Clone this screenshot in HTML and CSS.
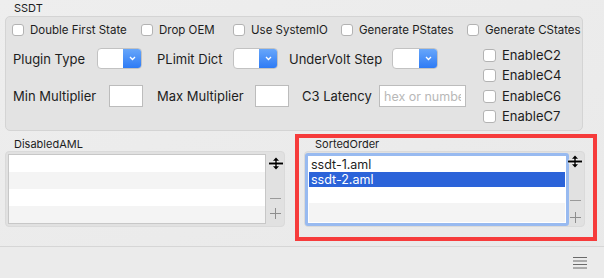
FILE: index.html
```html
<!doctype html>
<html>
   <head>
      <meta charset="utf-8">
      <title>SSDT</title>
      <link rel="stylesheet" href="styles.css">
   </head>
   <body>
      <div class="window">
         <div class="group-title">SSDT</div>
         <div class="group">
            <div class="flags">
               <label class="check"><input type="checkbox"> Double First State</label>
               <label class="check"><input type="checkbox"> Drop OEM</label>
               <label class="check"><input type="checkbox"> Use SystemIO</label>
               <label class="check"><input type="checkbox"> Generate PStates</label>
               <label class="check"><input type="checkbox"> Generate CStates</label>
            </div>
            <div class="group-body">
               <div class="form">
                  <div class="form-row">
                     <span class="lbl plugin">Plugin Type</span>
                     <span class="popup"><span class="popup-value"></span><span class="popup-arrow"><svg width="7" height="5" viewBox="0 0 7 5"><path d="M1 1L3.5 3.5L6 1" fill="none" stroke="#fff" stroke-width="1.3"/></svg></span></span>
                     <span class="lbl plimit">PLimit Dict</span>
                     <span class="popup"><span class="popup-value"></span><span class="popup-arrow"><svg width="7" height="5" viewBox="0 0 7 5"><path d="M1 1L3.5 3.5L6 1" fill="none" stroke="#fff" stroke-width="1.3"/></svg></span></span>
                     <span class="lbl undervolt">UnderVolt Step</span>
                     <span class="popup wide"><span class="popup-value"></span><span class="popup-arrow"><svg width="7" height="5" viewBox="0 0 7 5"><path d="M1 1L3.5 3.5L6 1" fill="none" stroke="#fff" stroke-width="1.3"/></svg></span></span>
                  </div>
                  <div class="form-row tall">
                     <span class="lbl minmul">Min Multiplier</span>
                     <input class="field" type="text">
                     <span class="lbl maxmul">Max Multiplier</span>
                     <input class="field" type="text">
                     <span class="lbl latency">C3 Latency</span>
                     <input class="field long" type="text" placeholder="hex or number">
                  </div>
               </div>
               <div class="cstates">
                  <label class="check big"><input type="checkbox"> EnableC2</label>
                  <label class="check big"><input type="checkbox"> EnableC4</label>
                  <label class="check big"><input type="checkbox"> EnableC6</label>
                  <label class="check big"><input type="checkbox"> EnableC7</label>
               </div>
            </div>
         </div>
         <div class="lists">
            <section class="list-panel">
               <div class="list-title">DisabledAML</div>
               <div class="list-frame">
                  <div class="table">
                     <div class="row"></div>
                     <div class="row"></div>
                     <div class="row"></div>
                     <div class="row"></div>
                  </div>
                  <div class="side">
                     <svg class="grip" width="16" height="13" viewBox="0 0 16 13"><path d="M1 6.5H15M8 2V11" stroke="#fff" stroke-width="3.5"/><path d="M1 6.5H15" stroke="#000" stroke-width="2"/><path d="M8 2V11" stroke="#000" stroke-width="1.4"/><path d="M5 3.8L8 0.6L11 3.8ZM5 9.2L8 12.4L11 9.2Z" fill="#000"/></svg>
                     <span class="minus"></span>
                     <span class="plus"></span>
                  </div>
               </div>
            </section>
            <section class="list-panel marked">
               <div class="list-title">SortedOrder</div>
               <div class="list-frame">
                  <div class="table focused">
                     <div class="row">ssdt-1.aml</div>
                     <div class="row selected">ssdt-2.aml</div>
                     <div class="row"></div>
                     <div class="row"></div>
                  </div>
                  <div class="side">
                     <svg class="grip" width="16" height="13" viewBox="0 0 16 13"><path d="M1 6.5H15M8 2V11" stroke="#fff" stroke-width="3.5"/><path d="M1 6.5H15" stroke="#000" stroke-width="2"/><path d="M8 2V11" stroke="#000" stroke-width="1.4"/><path d="M5 3.8L8 0.6L11 3.8ZM5 9.2L8 12.4L11 9.2Z" fill="#000"/></svg>
                     <span class="minus"></span>
                     <span class="plus"></span>
                  </div>
               </div>
            </section>
         </div>
         <div class="statusbar">
            <svg class="menu" width="14" height="12" viewBox="0 0 14 12"><path d="M0 0.5H14M0 4H14M0 7.5H14M0 11H14" stroke="#6a6a6a" stroke-width="1"/></svg>
         </div>
      </div>
   </body>
</html>
```

FILE: styles.css
```css
* { box-sizing: border-box; }
body {
margin: 0;
font-family: Inter, "Liberation Sans", sans-serif;
color: #1d1d1d;
}
.window {
width: 604px;
height: 278px;
background: linear-gradient(160deg, #eeeeee, #e9e9e9);
overflow: hidden;
}
.group-title {
height: 16px;
padding-left: 14px;
font-size: 11px;
line-height: 17px;
}
.group {
margin-left: 5px;
width: 578px;
height: 115px;
border: 1px solid #d4d4d4;
border-radius: 5px;
background: #e3e3e3;
padding: 6px 0 0 6px;
}
.flags {
display: grid;
grid-template-columns: 129px 92px 108px 126px auto;
height: 14px;
align-items: center;
}
.check {
display: flex;
align-items: center;
gap: 6px;
font-size: 11.5px;
line-height: 13px;
white-space: nowrap;
}
.check input {
-webkit-appearance: none;
appearance: none;
margin: 0;
width: 12px;
height: 12px;
background: #fff;
border: 1px solid #b3b3b3;
border-radius: 3px;
}
.check.big { font-size: 13px; }
.check.big input { width: 13px; height: 13px; }
.group-body {
display: flex;
margin-top: 11px;
}
.form { width: 471px; }
.form-row {
display: flex;
align-items: center;
height: 21px;
padding-left: 1px;
font-size: 13px;
}
.form-row.tall {
height: 22px;
margin-top: 16px;
}
.lbl { white-space: nowrap; }
.plugin { width: 84px; }
.plimit { width: 76px; margin-left: 15px; }
.undervolt { width: 103px; margin-left: 11px; }
.minmul { width: 96px; }
.maxmul { width: 98px; margin-left: 14px; }
.latency { width: 77px; margin-left: 13px; }
.popup {
display: flex;
width: 45px;
height: 21px;
border: 1px solid #c2c2c2;
border-radius: 4px;
overflow: hidden;
background: #fff;
}
.popup.wide { width: 46px; }
.popup-value { flex: 1; }
.popup-arrow {
width: 18px;
display: flex;
align-items: center;
justify-content: center;
background: linear-gradient(#67a6fa, #2e7bf5);
}
.field {
width: 34px;
height: 22px;
margin: 0;
border: 1px solid #bcbcbc;
background: #fff;
padding: 0 4px;
font: 12.5px Inter, "Liberation Sans", sans-serif;
}
.field.long { width: 87px; }
.field::placeholder { color: #b8b8b8; }
.cstates {
display: flex;
flex-direction: column;
gap: 7.3px;
margin-top: 1px;
}
.lists {
display: flex;
height: 115px;
}
.list-panel {
width: 295px;
padding-left: 5px;
}
.list-title {
padding: 6px 0 0 9px;
height: 20px;
font-size: 11px;
line-height: 14px;
}
.list-frame {
display: flex;
width: 280px;
height: 76px;
border: 1px solid #dadada;
border-radius: 4px;
background: #e1e1e1;
padding: 2px 0 2px 2px;
}
.table {
width: 258px;
border: 1px solid #c7c7c7;
background: #fff;
overflow: hidden;
}
.row {
height: 17px;
font-size: 12.5px;
line-height: 15px;
padding-left: 3px;
}
.row:nth-child(even) { background: #f4f4f4; }
.row.selected { background: #2b63d9; color: #fff; }
.side {
flex: 1;
display: flex;
flex-direction: column;
align-items: center;
padding-top: 3px;
}
.grip { margin-left: 1px; }
.minus {
margin-top: auto;
width: 11px;
height: 1px;
background: #9a9a9a;
}
.plus {
position: relative;
width: 11px;
height: 11px;
margin: 9px 0 5px;
}
.plus:before, .plus:after {
content: '';
position: absolute;
background: #8e8e8e;
}
.plus:before { left: 0; right: 0; top: 5px; height: 1px; }
.plus:after { top: 0; bottom: 0; left: 5px; width: 1px; }
.list-panel.marked {
width: 302px;
height: 107px;
margin-top: 3px;
border: 4px solid #f63b3b;
padding-left: 5px;
}
.marked .list-title {
padding: 0 0 0 11px;
height: 13px;
line-height: 13px;
}
.marked .list-frame {
width: 281px;
padding: 1px 0 0 0;
}
.table.focused {
width: 264px;
height: 73px;
border: 3px solid #98baf0;
padding: 1px;
border-radius: 3px;
}
.focused .row { height: 15px; line-height: 15px; padding-left: 2px; }
.focused .row:nth-child(3) { height: 16px; }
.focused .row:nth-child(4) { height: 19px; }
.marked .side { padding-top: 2px; }
.marked .grip { margin-left: -3px; }
.marked .minus { margin-left: -2px; }
.marked .plus { margin: 11px 0 3px -2px; }
.statusbar {
height: 32px;
border-top: 1px solid #d6d6d6;
background: #ebebeb;
display: flex;
justify-content: flex-end;
padding: 10px 17px 0 0;
}
```
